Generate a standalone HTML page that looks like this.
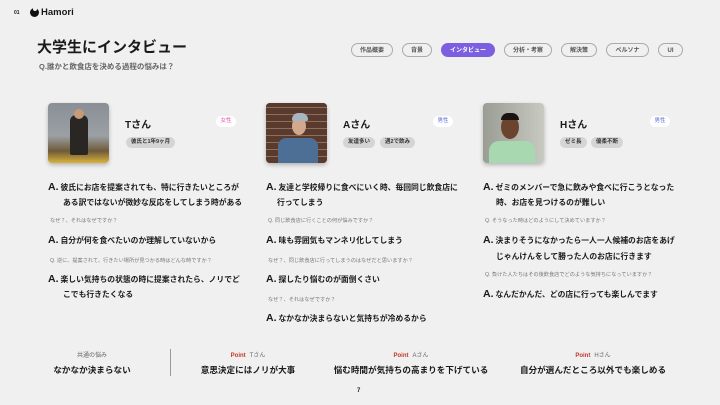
<!DOCTYPE html>
<html><head><meta charset="utf-8"><style>
*{margin:0;padding:0;box-sizing:border-box}
body{width:720px;height:405px;background:#f0f0f0;position:relative;overflow:hidden;font-family:"Liberation Sans","Noto Sans CJK JP",sans-serif;color:#1a1a1a}
.a{position:absolute;white-space:nowrap}
.pill{position:absolute;top:43px;height:14px;line-height:12px;padding-top:1px;border:1px solid #aaa;border-radius:8px;font-size:6px;color:#555;text-align:center;font-weight:bold}
.ph{position:absolute;top:103px;width:61px;height:60px;border-radius:4px;box-shadow:0 2px 4px rgba(0,0,0,.25);overflow:hidden}
.nm{position:absolute;top:116px;font-size:10px;font-weight:bold}
.tag{position:absolute;top:137px;height:11px;line-height:11px;border-radius:6px;background:#d5d5d5;font-size:5.5px;font-weight:bold;padding:0 5px;color:#333;white-space:nowrap}
.g{position:absolute;top:116px;height:11px;line-height:11px;width:20px;border-radius:6px;background:#fff;font-size:5.5px;text-align:center}
.ans{position:absolute;font-size:7.8px;font-weight:bold;white-space:nowrap;line-height:15px}
.ans b{font-size:10.5px;margin-right:2px}
.q{position:absolute;font-size:5.2px;color:#777;white-space:nowrap}
.lb{position:absolute;top:350px;font-size:6px;color:#666;text-align:center;white-space:nowrap}
.lb span{color:#c0392b;font-weight:bold;margin-right:4px}
.bt{position:absolute;top:364px;font-size:8.6px;font-weight:bold;white-space:nowrap;text-align:center}
</style></head><body>
<div class="a" style="left:14px;top:10px;font-size:5px;font-weight:bold">01</div>
<div class="a" style="left:30px;top:8px;width:9px;height:9px;border-radius:50%;background:#111"></div>
<div class="a" style="left:33px;top:7px;width:4px;height:4px;border-radius:50%;background:#f0f0f0"></div>
<div class="a" style="left:41px;top:7px;font-size:9.5px;font-weight:bold">Hamori</div>
<div class="a" style="left:37px;top:36px;font-size:15px;font-weight:bold">大学生にインタビュー</div>
<div class="a" style="left:39px;top:61px;font-size:7.5px;font-weight:bold;color:#666">Q.誰かと飲食店を決める過程の悩みは？</div>

<div class="pill" style="left:351px;width:42px">作品概要</div>
<div class="pill" style="left:402px;width:30px">背景</div>
<div class="pill" style="left:441px;width:54px;background:#7b5fe0;border-color:#7b5fe0;color:#fff">インタビュー</div>
<div class="pill" style="left:504px;width:48px">分析・考察</div>
<div class="pill" style="left:561px;width:36px">解決策</div>
<div class="pill" style="left:606px;width:43px">ペルソナ</div>
<div class="pill" style="left:658px;width:25px">UI</div>

<div class="ph" style="left:48px;background:linear-gradient(180deg,#8a8f96 0%,#9aa0a4 55%,#6d5a3a 80%,#d9b23a 100%)"><div style="position:absolute;left:22px;top:12px;width:18px;height:40px;background:#2a2624;border-radius:6px 6px 2px 2px"></div><div style="position:absolute;left:26px;top:6px;width:10px;height:10px;border-radius:50%;background:#c79a78"></div></div>
<div class="nm" style="left:125px">Tさん</div>
<div class="tag" style="left:126px">彼氏と1年9ヶ月</div>
<div class="g" style="left:216px;color:#e056b0">女性</div>
<div class="ans" style="left:48px;top:180px"><b>A.</b>彼氏にお店を提案されても、特に行きたいところが</div>
<div class="ans" style="left:63px;top:195px">ある訳ではないが微妙な反応をしてしまう時がある</div>
<div class="q" style="left:50px;top:217px">なぜ？、それはなぜですか？</div>
<div class="ans" style="left:48px;top:233px"><b>A.</b>自分が何を食べたいのか理解していないから</div>
<div class="q" style="left:50px;top:257px">Q. 逆に、提案されて、行きたい場所が見つかる時はどんな時ですか？</div>
<div class="ans" style="left:48px;top:272px"><b>A.</b>楽しい気持ちの状態の時に提案されたら、ノリでど</div>
<div class="ans" style="left:63px;top:287px">こでも行きたくなる</div>

<div class="ph" style="left:266px;background:#6b4a3a"><div style="position:absolute;left:0;top:0;width:61px;height:60px;background:repeating-linear-gradient(0deg,#5a3a2c 0 6px,#8a7060 6px 7px)"></div><div style="position:absolute;left:12px;top:35px;width:40px;height:25px;background:#4d6f96;border-radius:8px 8px 0 0"></div><div style="position:absolute;left:26px;top:14px;width:14px;height:18px;border-radius:50%;background:#d2a98c"></div><div style="position:absolute;left:26px;top:10px;width:16px;height:8px;border-radius:8px 8px 2px 2px;background:#a9b6c2"></div></div>
<div class="nm" style="left:343px">Aさん</div>
<div class="tag" style="left:343px">友達多い</div>
<div class="tag" style="left:380px">週2で飲み</div>
<div class="g" style="left:433px;color:#5b6fd6">男性</div>
<div class="ans" style="left:266px;top:180px"><b>A.</b>友達と学校帰りに食べにいく時、毎回同じ飲食店に</div>
<div class="ans" style="left:277px;top:195px">行ってしまう</div>
<div class="q" style="left:268px;top:217px">Q. 同じ飲食店に行くことの何が悩みですか？</div>
<div class="ans" style="left:266px;top:233px"><b>A.</b>味も雰囲気もマンネリ化してしまう</div>
<div class="q" style="left:268px;top:257px">なぜ？、同じ飲食店に行ってしまうのはなぜだと思いますか？</div>
<div class="ans" style="left:266px;top:272px"><b>A.</b>探したり悩むのが面倒くさい</div>
<div class="q" style="left:268px;top:296px">なぜ？、それはなぜですか？</div>
<div class="ans" style="left:266px;top:311px"><b>A.</b>なかなか決まらないと気持ちが冷めるから</div>

<div class="ph" style="left:483px;background:linear-gradient(90deg,#9a9d94,#c8c9c0)"><div style="position:absolute;left:6px;top:38px;width:46px;height:22px;background:#a8d8b0;border-radius:10px 10px 0 0"></div><div style="position:absolute;left:18px;top:12px;width:18px;height:24px;border-radius:50%;background:#6b4430"></div><div style="position:absolute;left:18px;top:10px;width:18px;height:7px;border-radius:8px 8px 0 0;background:#1a1512"></div></div>
<div class="nm" style="left:560px">Hさん</div>
<div class="tag" style="left:560px">ゼミ長</div>
<div class="tag" style="left:591px">優柔不断</div>
<div class="g" style="left:650px;color:#5b6fd6">男性</div>
<div class="ans" style="left:483px;top:180px"><b>A.</b>ゼミのメンバーで急に飲みや食べに行こうとなった</div>
<div class="ans" style="left:496px;top:195px">時、お店を見つけるのが難しい</div>
<div class="q" style="left:485px;top:217px">Q. そうなった時はどのようにして決めていますか？</div>
<div class="ans" style="left:483px;top:233px"><b>A.</b>決まりそうになかったら一人一人候補のお店をあげ</div>
<div class="ans" style="left:496px;top:249px">じゃんけんをして勝った人のお店に行きます</div>
<div class="q" style="left:485px;top:271px">Q. 負けた人たちはその後飲食店でどのような気持ちになっていますか？</div>
<div class="ans" style="left:483px;top:287px"><b>A.</b>なんだかんだ、どの店に行っても楽しんでます</div>

<div class="lb" style="left:52px;width:80px">共通の悩み</div>
<div class="bt" style="left:42px;width:100px">なかなか決まらない</div>
<div class="a" style="left:170px;top:349px;width:1px;height:27px;background:#999"></div>
<div class="lb" style="left:208px;width:80px"><span>Point</span>Tさん</div>
<div class="bt" style="left:198px;width:100px">意思決定にはノリが大事</div>
<div class="lb" style="left:371px;width:80px"><span>Point</span>Aさん</div>
<div class="bt" style="left:311px;width:200px">悩む時間が気持ちの高まりを下げている</div>
<div class="lb" style="left:553px;width:80px"><span>Point</span>Hさん</div>
<div class="bt" style="left:493px;width:200px">自分が選んだところ以外でも楽しめる</div>
<div class="a" style="left:357px;top:388px;font-size:6px;font-weight:bold">7</div>
</body></html>
